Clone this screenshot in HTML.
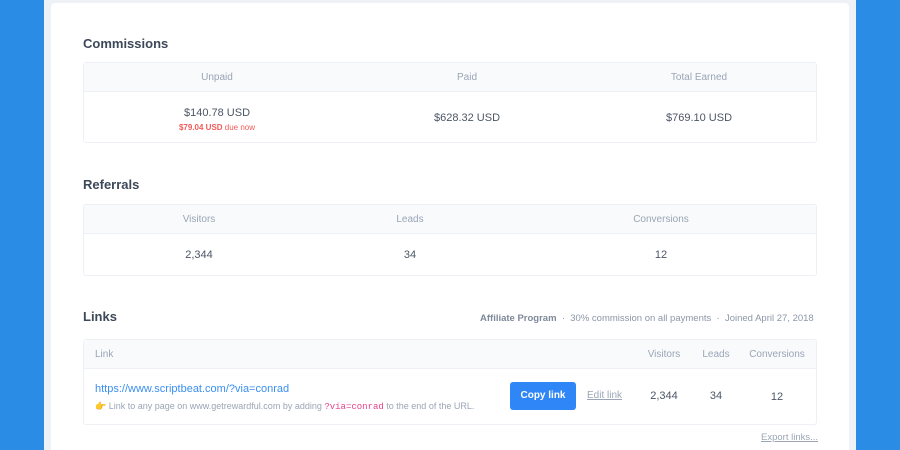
<!DOCTYPE html>
<html><head><style>
*{margin:0;padding:0;box-sizing:border-box}
html,body{width:900px;height:450px;overflow:hidden}
body{background:#2b8ce6;font-family:"Liberation Sans",sans-serif;position:relative}
.gray{position:absolute;left:44px;top:0;width:812px;height:450px;background:#eef2f6}
.card{position:absolute;left:51px;top:3px;width:798px;height:447px;background:#fff;border-radius:4px 4px 0 0}
h2{position:absolute;left:83px;font-size:13px;font-weight:bold;color:#3d4858}
.box{position:absolute;left:83px;width:734px;border:1px solid #edf0f4;border-radius:3px;background:#fff}
.hd{background:#f8fafc;height:29px;border-bottom:1px solid #edf0f4;position:relative}
.c{position:absolute;font-size:10px;color:#9aa5b5;transform:translateX(-50%);white-space:nowrap}
.v{position:absolute;font-size:11px;color:#4c5665;transform:translateX(-50%);white-space:nowrap}
.meta{position:absolute;top:313px;font-size:9.5px;color:#8c97a8;white-space:nowrap}
</style></head><body>
<div class="gray"></div>
<div class="card"></div>

<h2 style="top:36px">Commissions</h2>
<div class="box" style="top:62px;height:81px">
 <div class="hd"><span class="c" style="left:133px;top:9px">Unpaid</span><span class="c" style="left:383px;top:9px">Paid</span><span class="c" style="left:615px;top:9px">Total Earned</span></div>
 <span class="v" style="left:133px;top:44px">$140.78 USD</span>
 <span class="v" style="left:133px;top:60px;font-size:8px;color:#f25a5a"><b>$79.04 USD</b> due now</span>
 <span class="v" style="left:383px;top:49px">$628.32 USD</span>
 <span class="v" style="left:615px;top:49px">$769.10 USD</span>
</div>

<h2 style="top:177px">Referrals</h2>
<div class="box" style="top:204px;height:72px">
 <div class="hd"><span class="c" style="left:115px;top:9px">Visitors</span><span class="c" style="left:326px;top:9px">Leads</span><span class="c" style="left:577px;top:9px">Conversions</span></div>
 <span class="v" style="left:115px;top:44px">2,344</span>
 <span class="v" style="left:326px;top:44px">34</span>
 <span class="v" style="left:577px;top:44px">12</span>
</div>

<h2 style="top:309px">Links</h2>
<div class="meta" style="left:480px"><b style="color:#7d8899">Affiliate Program</b> &nbsp;·&nbsp; 30% commission on all payments &nbsp;·&nbsp; Joined April 27, 2018</div>
<div class="box" style="top:339px;height:86px">
 <div class="hd"><span style="position:absolute;left:11px;top:9px;font-size:10px;color:#9aa5b5">Link</span>
 <span class="c" style="left:580px;top:9px">Visitors</span><span class="c" style="left:632px;top:9px">Leads</span><span class="c" style="left:693px;top:9px">Conversions</span></div>
 <span style="position:absolute;left:11px;top:43px;font-size:11px;color:#3a8ff0">https://www.scriptbeat.com/?via=conrad</span>
 <span style="position:absolute;left:11px;top:61px;font-size:9px;color:#9aa5b5;white-space:nowrap"><span style="color:#f0b429">👉</span> Link to any page on www.getrewardful.com by adding <span style="font-family:'Liberation Mono',monospace;color:#e8418b">?via=conrad</span> to the end of the URL.</span>
 <div style="position:absolute;left:426px;top:42px;width:66px;height:28px;background:#2f86f6;border-radius:3px;color:#fff;font-size:10px;font-weight:bold;text-align:center;line-height:28px">Copy link</div>
 <span style="position:absolute;left:503px;top:50px;font-size:10px;color:#9aa5b5;text-decoration:underline">Edit link</span>
 <span class="v" style="left:580px;top:50px">2,344</span>
 <span class="v" style="left:632px;top:50px">34</span>
 <span class="v" style="left:693px;top:51px">12</span>
</div>
<span style="position:absolute;left:761px;top:432px;font-size:9.5px;color:#9aa5b5;text-decoration:underline">Export links...</span>
</body></html>
